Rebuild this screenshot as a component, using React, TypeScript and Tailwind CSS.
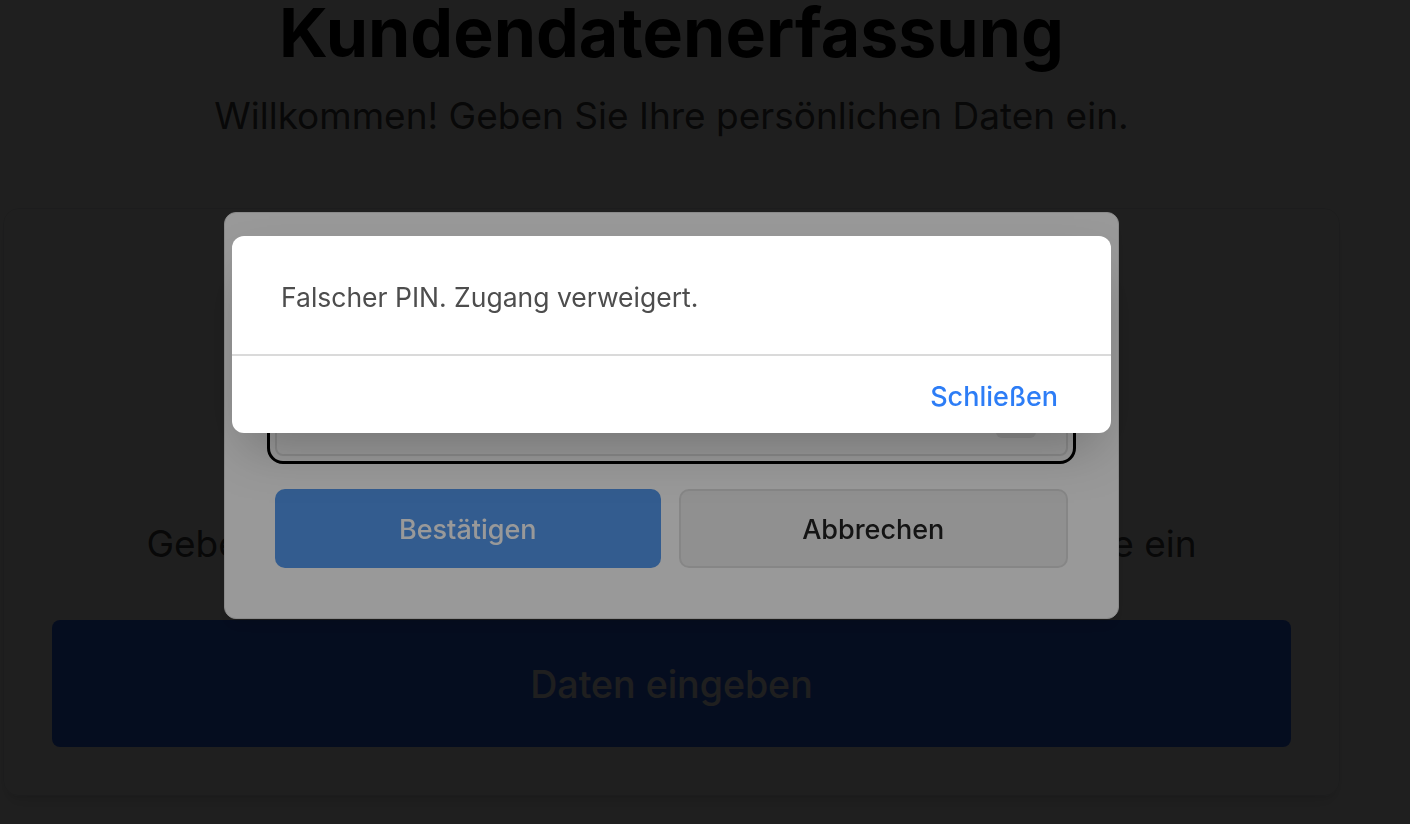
import React from "react";

export default function App() {
  return (
    <div className="min-h-screen bg-white font-['Inter',sans-serif] overflow-hidden">
      {/* Seite */}
      <div className="w-[1343px] px-[3px]">
        <h1 className="-mt-[2px] text-center text-[68px] leading-none font-bold text-black">Kundendatenerfassung</h1>
        <p className="mt-[28px] text-center text-[37px] leading-[44px] text-[#444]">
          Willkommen! Geben Sie Ihre persönlichen Daten ein.
        </p>

        <div className="mt-[70px] h-[588px] rounded-2xl border border-[#e5e7eb] shadow-lg p-12 flex flex-col">
          <div className="h-[265px]" />
          <p className="text-center text-[37px] leading-[44px] text-[#444]">
            Geben Sie Ihren sechsstelligen PIN für die Dateneingabe ein
          </p>
          <button className="mt-[54px] h-[127px] w-full rounded-lg bg-[#2f6bff] pt-1 text-white text-[37.5px] font-medium">
            Daten eingeben
          </button>
        </div>
      </div>

      {/* PIN Modal */}
      <div className="fixed inset-0 bg-black/80">
        <div className="w-[1343px] h-full flex items-center justify-center pt-[6px]">
          <div className="w-[895px] h-[407px] rounded-xl bg-white border border-[#e5e5e5] shadow-lg p-[50px] flex flex-col">
            <h2 className="text-[30px] leading-[40px] font-semibold text-[#222]">PIN eingeben</h2>
            <p className="mt-4 text-[20px] leading-8 text-[#555]">Bitte geben Sie Ihren PIN ein.</p>
            <div className="relative mt-[43px] h-[64px] rounded-lg border-2 border-[#e5e5e5] outline-[3px] outline-solid outline-black outline-offset-[5px]">
              <span className="absolute right-[30px] bottom-[16px] w-[40px] h-[40px] rounded-md bg-[#ebebeb]" />
            </div>
            <div className="mt-[33px] flex gap-[18px]">
              <button className="flex-1 h-[79px] rounded-[10px] bg-[#5599ee] pt-1 text-white text-[27px] font-medium">
                Bestätigen
              </button>
              <button className="flex-1 h-[79px] rounded-[10px] bg-[#f0f0f0] border-2 border-[#e0e0e0] pt-1 text-[#222] text-[27px] font-medium">
                Abbrechen
              </button>
            </div>
          </div>
        </div>
      </div>

      {/* Alert */}
      <div className="fixed inset-0 bg-black/40">
        <div className="w-[1343px] flex justify-center pt-[236px]">
          <div className="w-[879px] rounded-xl bg-white shadow-2xl overflow-hidden">
            <div className="h-[118px] px-[49px] pt-[6px] flex items-center">
              <p className="text-[26.5px] text-[#4d4d4d]">Falscher PIN. Zugang verweigert.</p>
            </div>
            <div className="h-[2px] bg-[#dadada]" />
            <div className="h-[77px] px-[53px] pt-[5px] flex items-center justify-end">
              <button className="text-[27px] font-medium text-[#2d7df6]">Schließen</button>
            </div>
          </div>
        </div>
      </div>
    </div>
  );
}
